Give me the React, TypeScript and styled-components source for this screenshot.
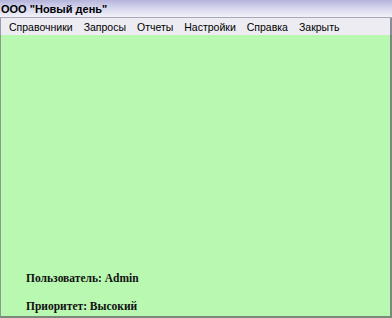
import React from 'react';
import styled, { createGlobalStyle } from 'styled-components';

const GlobalStyle = createGlobalStyle`
  html, body {
    margin: 0;
    padding: 0;
    background: #ffffff;
  }
`;

const Window = styled.div`
  width: 392px;
  height: 318px;
  display: flex;
  flex-direction: column;
  box-sizing: border-box;
  overflow: hidden;
`;

const TitleBar = styled.div`
  height: 17px;
  display: flex;
  align-items: center;
  padding-left: 1px;
  background: linear-gradient(#b4b4dc 0%, #d4d4ec 45%, #f2f2fa 100%);
  font-family: 'Liberation Sans', Arial, sans-serif;
  font-weight: bold;
  font-size: 11px;
  color: #000;
  border-bottom: 1px solid #a8a8b8;
`;

const MenuBar = styled.div`
  height: 17px;
  display: flex;
  align-items: center;
  gap: 11px;
  padding-left: 8px;
  background: #ececf2;
  border-left: 1px solid #9a9aa8;
  border-right: 2px solid #8a8a98;
  font-family: 'Liberation Sans', Arial, sans-serif;
  font-size: 10.5px;
  color: #000;
`;

const MenuItem = styled.span``;

const Body = styled.div`
  flex: 1;
  background: #b8f8b0;
  border-left: 1px solid #8a9a8a;
  border-right: 2px solid #7a8a7a;
  border-bottom: 2px solid #7a8a7a;
  display: flex;
  flex-direction: column;
  justify-content: flex-end;
  padding: 0 0 4px 25px;
`;

const Info = styled.div`
  font-family: 'Liberation Serif', serif;
  font-weight: bold;
  font-size: 11.5px;
  color: #111;
  & + & {
    margin-top: 16px;
  }
`;

const menu = ['Справочники', 'Запросы', 'Отчеты', 'Настройки', 'Справка', 'Закрыть'];

export default function App() {
  return (
    <>
      <GlobalStyle />
      <Window>
        <TitleBar>ООО "Новый день"</TitleBar>
        <MenuBar>
          {menu.map(m => (
            <MenuItem key={m}>{m}</MenuItem>
          ))}
        </MenuBar>
        <Body>
          <Info>Пользователь: Admin</Info>
          <Info>Приоритет: Высокий</Info>
        </Body>
      </Window>
    </>
  );
}
